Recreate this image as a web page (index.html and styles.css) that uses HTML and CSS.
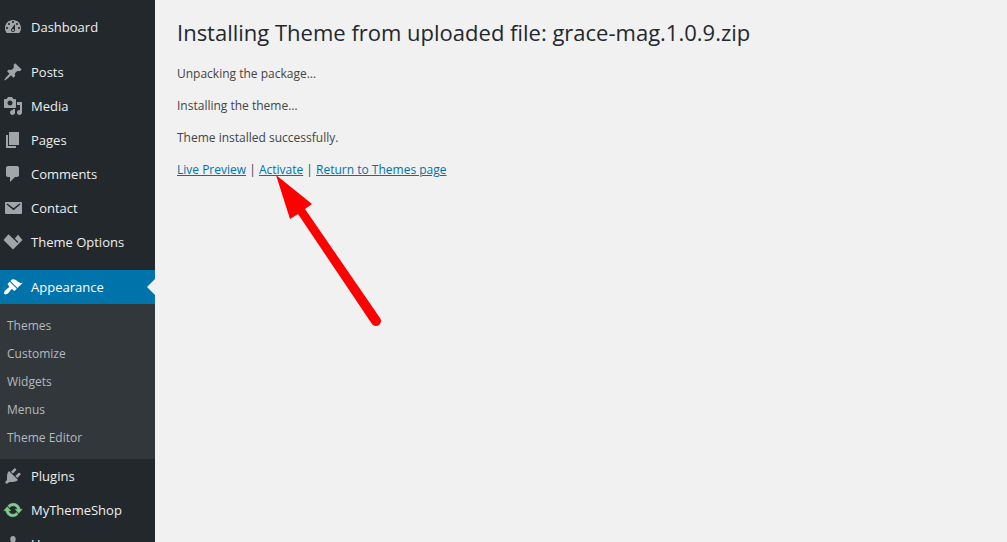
FILE: index.html
```html
<!DOCTYPE html>
<html lang="en">
	<head>
		<meta charset="utf-8">
		<meta name="viewport" content="width=device-width,initial-scale=1">
		<title>Installing Theme</title>
		<link rel="stylesheet" href="styles.css">
	</head>
	<body>
		<nav class="menu">
			<ul>
				<li><a href="#"><svg viewBox="0 0 20 20"><path d="M3.76 16h12.48c1.1-1.37 1.76-3.11 1.76-5 0-4.42-3.58-8-8-8s-8 3.58-8 8c0 1.89.66 3.63 1.76 5zM10 4c.55 0 1 .45 1 1s-.45 1-1 1-1-.45-1-1 .45-1 1-1zM6 6c.55 0 1 .45 1 1s-.45 1-1 1-1-.45-1-1 .45-1 1-1zm8 0c.55 0 1 .45 1 1s-.45 1-1 1-1-.45-1-1 .45-1 1-1zm-5.37 5.55L12 7v6c0 1.1-.9 2-2 2s-2-.9-2-2c0-.57.24-1.08.63-1.45zM4 10c.55 0 1 .45 1 1s-.45 1-1 1-1-.45-1-1 .45-1 1-1zm12 0c.55 0 1 .45 1 1s-.45 1-1 1-1-.45-1-1 .45-1 1-1zm-5 3c0-.55-.45-1-1-1s-1 .45-1 1 .45 1 1 1 1-.45 1-1z"/></svg>Dashboard</a></li>
				<li class="group"><a href="#"><svg viewBox="0 0 20 20"><path d="M10.44 3.02l1.82-1.82 6.36 6.35-1.83 1.82c-1.05-.68-2.48-.57-3.41.36l-.75.75c-.92.93-1.04 2.35-.35 3.41l-1.83 1.82-2.41-2.41-2.8 2.79c-.42.42-3.38 2.71-3.8 2.29s1.86-3.39 2.28-3.81l2.79-2.79L4.1 9.36l1.83-1.82c1.05.69 2.48.57 3.4-.36l.75-.75c.93-.92 1.05-2.35.36-3.41z"/></svg>Posts</a></li>
				<li><a href="#"><svg viewBox="0 0 20 20"><path d="M13 11V4c0-.55-.45-1-1-1h-1.67L9 1H5L3.67 3H2c-.55 0-1 .45-1 1v7c0 .55.45 1 1 1h10c.55 0 1-.45 1-1zM7 4.5c1.38 0 2.5 1.12 2.5 2.5S8.38 9.5 7 9.5 4.5 8.38 4.5 7 5.62 4.5 7 4.5zM14 6h5v10.5c0 1.38-1.12 2.5-2.5 2.5S14 17.88 14 16.5s1.12-2.5 2.5-2.5c.17 0 .34.02.5.05V9h-3V6zm-4 8.05V13h2v3.5c0 1.38-1.12 2.5-2.5 2.5S7 17.88 7 16.5 8.12 14 9.5 14c.17 0 .34.02.5.05z"/></svg>Media</a></li>
				<li><a href="#"><svg viewBox="0 0 20 20"><path d="M6 15V2h10v13H6zm-1 1h8v2H3V5h2v11z"/></svg>Pages</a></li>
				<li><a href="#"><svg viewBox="0 0 20 20"><path d="M5 2h9c1.1 0 2 .9 2 2v7c0 1.1-.9 2-2 2h-2l-5 5v-5H5c-1.1 0-2-.9-2-2V4c0-1.1.9-2 2-2z"/></svg>Comments</a></li>
				<li><a href="#"><svg viewBox="0 0 20 20"><rect x="2" y="4" width="17" height="12" rx="1"/><path class="flap" d="M4 6l6.500 5.200L17 6"/></svg>Contact</a></li>
				<li><a href="#"><svg viewBox="0 0 20 20"><path d="M5.500 2.300L.5 8l9.500 9.500 9.500-9.500-4.500-5.200-3.200 3.600 3.600 3.700-.8.800z"/></svg>Theme Options</a></li>
				<li class="group current">
					<a href="#" aria-current="page"><svg viewBox="0 0 20 20"><path d="M14.48 11.06L7.41 3.99l1.5-1.5c.5-.56 2.3-.47 3.51.32 1.21.8 1.43 1.28 2.91 2.1 1.18.64 2.45 1.26 4.45.85zm-.71.71L6.7 4.7 4.93 6.47c-.39.39-.39 1.02 0 1.41l1.06 1.06c.39.39.39 1.03 0 1.42-.6.6-1.43 1.11-2.21 1.69-.35.26-.7.53-1.01.84C1.43 14.23.4 16.08 1.4 17.07c.99 1 2.84-.03 4.18-1.36.31-.31.58-.66.85-1.02.57-.78 1.08-1.61 1.69-2.21.39-.39 1.02-.39 1.41 0l1.06 1.06c.39.39 1.02.39 1.41 0z"/></svg>Appearance</a>
					<ul class="submenu">
						<li><a href="#">Themes</a></li>
						<li><a href="#">Customize</a></li>
						<li><a href="#">Widgets</a></li>
						<li><a href="#">Menus</a></li>
						<li><a href="#">Theme Editor</a></li>
					</ul>
				</li>
				<li><a href="#"><svg viewBox="0 0 20 20"><path d="M13.11 4.36L9.87 7.6 8 5.73l3.24-3.24c.35-.34 1.05-.2 1.56.32.52.51.66 1.21.31 1.55zm-8 1.77l.91-1.12 9.01 9.01-1.19.84c-.71.71-2.63 1.16-3.82 1.16H6.14L4.9 17.26c-.59.59-1.54.59-2.12 0-.59-.58-.59-1.53 0-2.12l1.24-1.24v-3.88c0-1.13.4-3.19 1.09-3.89zm7.26 3.97l3.24-3.24c.34-.35 1.04-.21 1.55.31.52.51.66 1.21.31 1.55l-3.24 3.25z"/></svg>Plugins</a></li>
				<li><a href="#"><svg class="green" viewBox="0 0 20 20"><path d="M10.2 3.28c3.53 0 6.43 2.61 6.92 6h2.08l-3.5 4-3.5-4h2.32c-.45-1.97-2.21-3.45-4.32-3.45-1.45 0-2.73.71-3.54 1.78L4.95 5.66C6.23 4.2 8.11 3.28 10.2 3.28zm-.4 13.44c-3.52 0-6.43-2.61-6.92-6H.8l3.5-4c1.17 1.33 2.33 2.67 3.5 4H5.48c.45 1.97 2.21 3.45 4.32 3.45 1.45 0 2.73-.71 3.54-1.78l1.71 1.95c-1.28 1.46-3.15 2.38-5.25 2.38z"/></svg>MyThemeShop</a></li>
				<li><a href="#"><svg viewBox="0 0 20 20"><path d="M10 9.25c-2.27 0-2.73-3.44-2.73-3.44C7 4.02 7.82 2 9.97 2c2.16 0 2.98 2.02 2.71 3.81 0 0-.41 3.44-2.68 3.44zm0 2.57L12.72 10c2.39 0 4.52 2.33 4.52 4.53v2.49s-3.65 1.13-7.24 1.13c-3.65 0-7.24-1.13-7.24-1.13v-2.49c0-2.25 1.94-4.48 4.47-4.48z"/></svg>Users</a></li>
			</ul>
		</nav>
		<main class="content">
			<h1>Installing Theme from uploaded file: grace-mag.1.0.9.zip</h1>
			<p>Unpacking the package…</p>
			<p>Installing the theme…</p>
			<p>Theme installed successfully.</p>
			<p><a href="#">Live Preview</a> | <a class="activate" href="#">Activate<svg class="arrow" viewBox="0 0 110 155"><path d="M1 0l36 29-7 5 75 109a4.500 4.500 0 0 1-8 6L23 39l-8 5z"/></svg></a> | <a href="#">Return to Themes page</a></p>
		</main>
	</body>
</html>
```
FILE: styles.css
```css
body{
	background-color:#f1f1f1;
	color:#444;
	display:flex;
	font-family:'Open Sans','Noto Sans',sans-serif;
	font-size:12px;
	height:100vh;
	line-height:18px;
	margin:0;
	overflow:hidden;
}
ul{
	list-style:none;
	margin:0;
	padding:0;
}

/* sidebar */
.menu{
	background-color:#23282d;
	box-sizing:border-box;
	flex:none;
	font-size:13px;
	overflow:hidden;
	padding-top:10px;
	width:155px;
}.menu a{
	align-items:center;
	color:#eee;
	display:flex;
	gap:8px;
	height:34px;
	padding-left:3px;
	text-decoration:none;
}.menu svg{
	fill:#a0a5aa;
	flex:none;
	height:20px;
	width:20px;
}
.menu .flap{
	fill:none;
	stroke:#23282d;
	stroke-width:1.5;
}
.menu .green{
	fill:#7fce8d;
	stroke:#7fce8d;
	stroke-width:.5;
}
.group{
	margin-top:11px;
}
.current>a{
	background-color:#0073aa;
	color:#fff;
	position:relative;
}.current>a::after{
	border:8px solid transparent;
	border-right-color:#f1f1f1;
	content:'';
	position:absolute;
	right:0;
	top:9px;
}.current>a svg{
	fill:#fff;
}
.submenu{
	background-color:#32373c;
	font-size:12px;
	padding:8px 0 7px;
}.submenu a{
	color:#b4b9be;
	height:28px;
	padding-left:7px;
}

/* install log */
.content{
	flex:1;
	padding:18px 20px 0 22px;
}.content h1{
	color:#23282d;
	font-size:22px;
	font-weight:400;
	line-height:29px;
	margin:0 0 18px;
}.content p{
	margin:0 0 14px;
}.content a{
	color:#0073aa;
}
.activate{
	position:relative;
}
.arrow{
	fill:#f00;
	height:155px;
	left:16px;
	pointer-events:none;
	position:absolute;
	top:14px;
	width:110px;
}
```
